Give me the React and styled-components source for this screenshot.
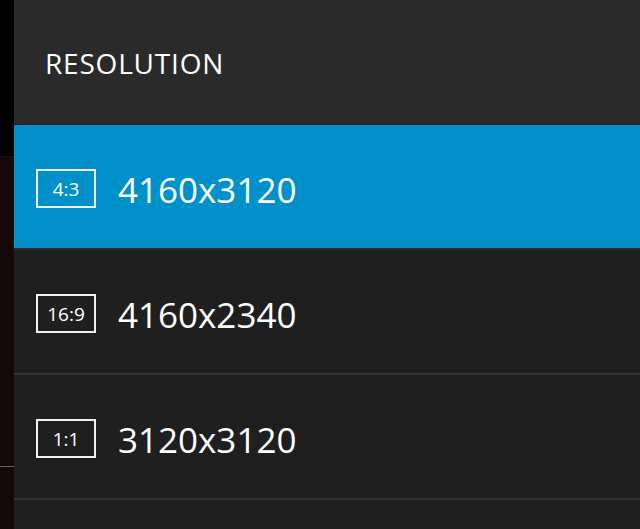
import React from "react"
import styled, { createGlobalStyle } from "styled-components"

const GlobalStyle = createGlobalStyle`
  html, body {
    margin: 0;
    padding: 0;
    background: #000;
  }
  body {
    font-family: "Open Sans", "Noto Sans", sans-serif;
  }
`

const Screen = styled.div`
  display: flex;
  width: 640px;
  height: 529px;
  overflow: hidden;
`

const Backdrop = styled.div`
  display: flex;
  flex-flow: column;
  width: 14px;
  flex-shrink: 0;
`

const BackdropTop = styled.div`
  height: 156px;
  background: #000;
`

const BackdropBottom = styled.div`
  flex: 1;
  background: #140808;
  border-top: 1px solid #1c0d0b;
  padding-top: 309px;
`

const BackdropLine = styled.div`
  height: 1px;
  background: #6a6462;
`

const Panel = styled.div`
  display: flex;
  flex-flow: column;
  flex: 1;
  background: #1f1f1f;
`

const Header = styled.div`
  display: flex;
  align-items: center;
  box-sizing: border-box;
  height: 125px;
  padding: 2px 0 0 31px;
  background: #2a2a2a;
  border-bottom: 1px solid #1b1b1b;
  color: #fff;
  font-size: 28px;
  letter-spacing: 0.8px;
`

const Option = styled.div`
  display: flex;
  align-items: center;
  gap: 22px;
  box-sizing: border-box;
  height: 125px;
  padding: 4px 0 0 22px;
  background: ${p => (p.selected ? "#0091cb" : "#1f1f1f")};
  border-bottom: 2px solid ${p => (p.selected ? "#2a2a2a" : "#333")};
  color: #fff;
`

const Ratio = styled.div`
  display: flex;
  align-items: center;
  justify-content: center;
  box-sizing: border-box;
  width: 60px;
  height: 39px;
  border: 2px solid #f2f2f2;
  font-size: 19px;
`

const Size = styled.span`
  font-size: 35px;
  line-height: 1;
  padding-top: 2px;
`

const options = [
  { ratio: "4:3", size: "4160x3120", selected: true },
  { ratio: "16:9", size: "4160x2340" },
  { ratio: "1:1", size: "3120x3120" },
]

const App = () => (
  <Screen>
    <GlobalStyle />
    <Backdrop>
      <BackdropTop />
      <BackdropBottom>
        <BackdropLine />
      </BackdropBottom>
    </Backdrop>
    <Panel>
      <Header>RESOLUTION</Header>
      {options.map(o => (
        <Option key={o.size} selected={o.selected}>
          <Ratio>{o.ratio}</Ratio>
          <Size>{o.size}</Size>
        </Option>
      ))}
    </Panel>
  </Screen>
)

export default App
